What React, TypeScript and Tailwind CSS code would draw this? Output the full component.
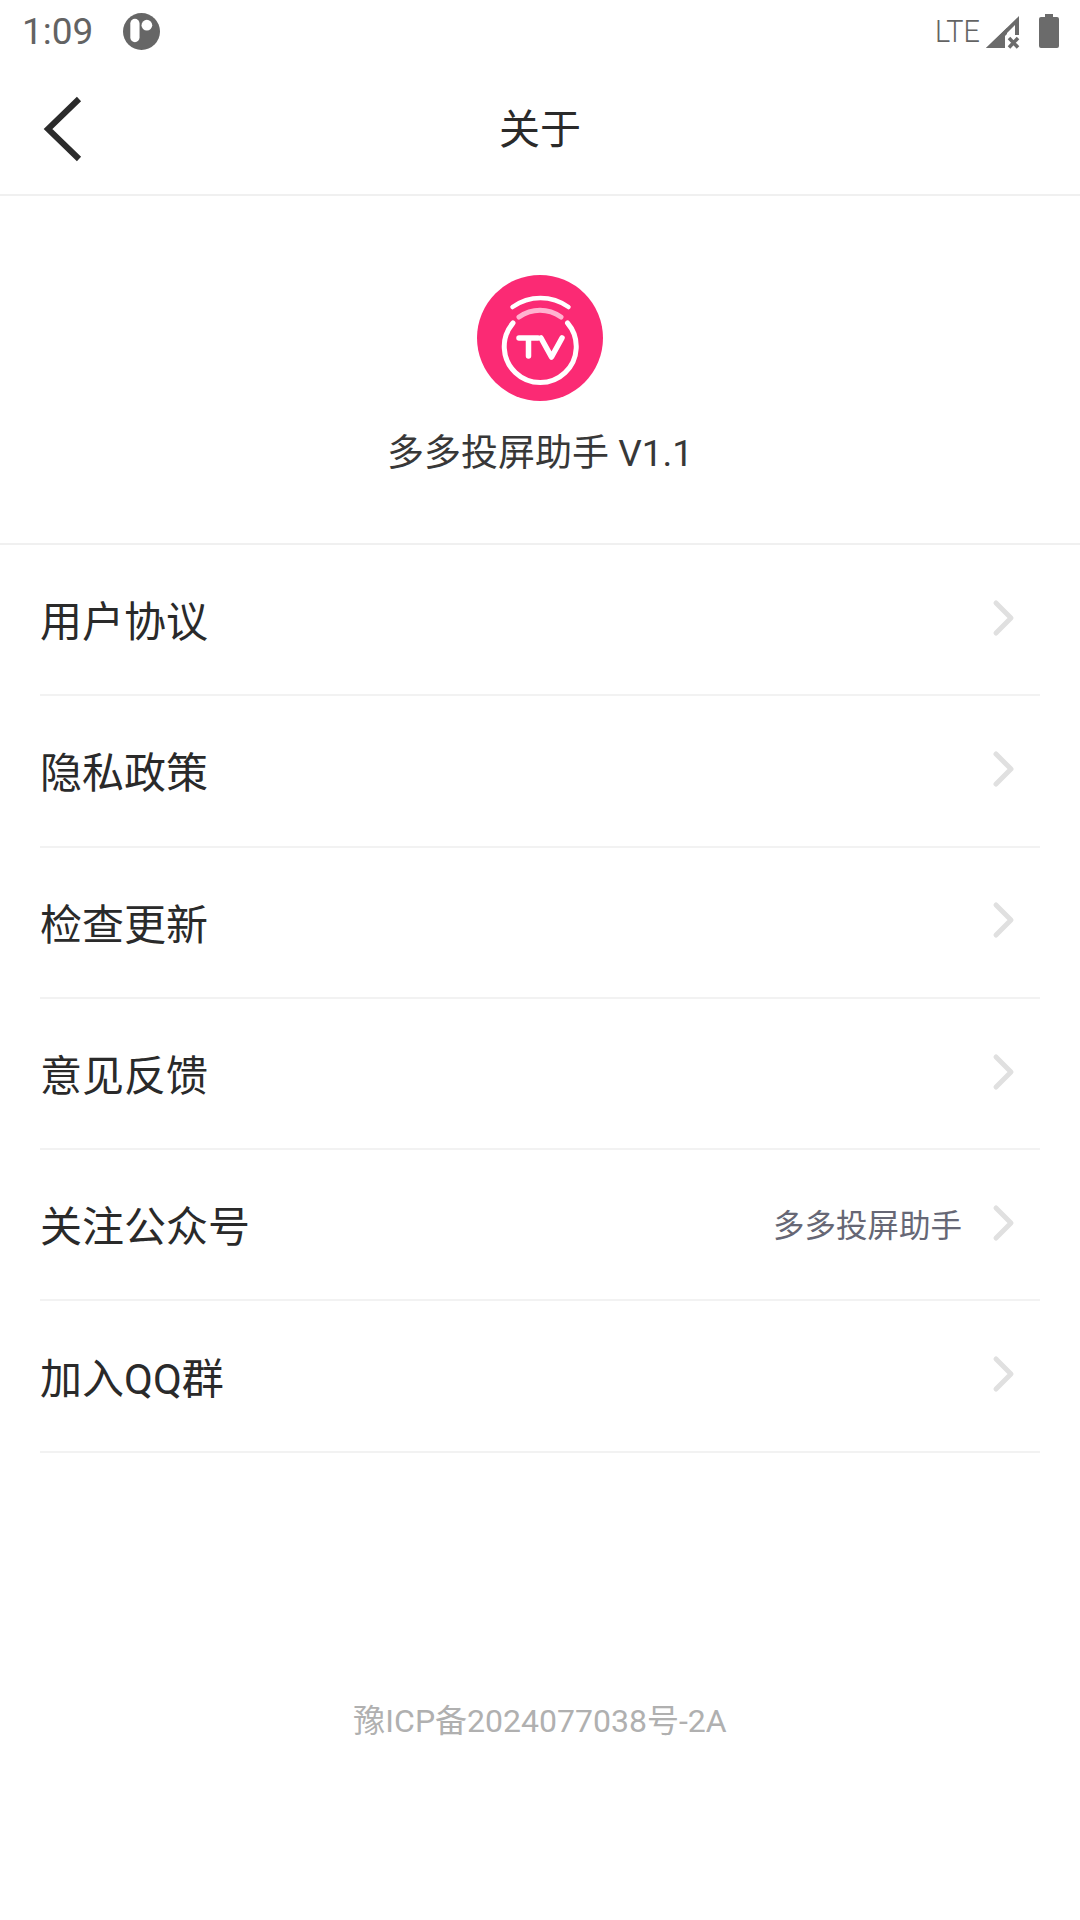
const rows = [
  { label: "用户协议" },
  { label: "隐私政策" },
  { label: "检查更新" },
  { label: "意见反馈" },
  { label: "关注公众号", extra: "多多投屏助手" },
  { label: "加入QQ群" },
];

function Chevron() {
  return (
    <svg width="24" height="40" viewBox="0 0 24 40" fill="none" className="ml-[30px] mr-[24px] -mt-[4px]">
      <path d="M4 5l15 15L4 35" stroke="#e0e0e0" strokeWidth="5" strokeLinecap="round" strokeLinejoin="round" />
    </svg>
  );
}

function StatusBar() {
  return (
    <div className="flex h-[66px] items-start justify-between pl-[22px] pr-[21px] pt-[13px] text-[#636363]">
      <div className="flex items-center">
        <span className="text-[37px] leading-[37px] font-['Roboto',sans-serif]">1:09</span>
        <svg width="37" height="37" viewBox="0 0 38 38" className="ml-[30px]">
          <circle cx="19" cy="19" r="19" fill="#666" />
          <rect x="7.5" y="6" width="9.5" height="24" rx="4.75" fill="#fff" />
          <circle cx="24.5" cy="12.5" r="5.5" fill="#fff" />
        </svg>
      </div>
      <div className="flex items-start">
        <span className="mt-[1px] origin-right scale-x-90 text-[32px] leading-[35px] font-['Roboto',sans-serif] font-light">LTE</span>
        <svg width="34" height="34" viewBox="0 0 34 34" className="ml-[6px] mt-[2px]">
          <path d="M0 33L33 1v19h-4V10L17 22v11z" fill="#6b6b6b" />
          <path d="M0 33l21-20v6l-2 2v12z" fill="#6b6b6b" />
          <path d="M23 23l9 9.5M32 23l-9 9.5" stroke="#6b6b6b" strokeWidth="3.5" />
        </svg>
        <svg width="20" height="34" viewBox="0 0 20 34" className="ml-[19px] mt-[1px]">
          <path d="M6 0h8v3h4a2 2 0 0 1 2 2v27a2 2 0 0 1-2 2H2a2 2 0 0 1-2-2V5a2 2 0 0 1 2-2h4z" fill="#6b6b6b" />
        </svg>
      </div>
    </div>
  );
}

function Logo() {
  return (
    <svg width="126" height="126" viewBox="0 0 126 126">
      <circle cx="63" cy="63" r="63" fill="#fb2a74" />
      <path d="M35.500 32c17-12 39-12 56 0" stroke="#fff" strokeWidth="4.500" strokeLinecap="round" fill="none" />
      <path d="M42 42c13-9 29-9 42 0" stroke="#ffb3d0" strokeWidth="5" strokeLinecap="round" fill="none" />
      <path d="M36 48a36 36 0 1 0 54.500 0" stroke="#fff" strokeWidth="5" strokeLinecap="round" fill="none" />
      <path d="M42 63h19M51.500 63v18M64 63l10.500 19L85 63" stroke="#fff" strokeWidth="5.500" strokeLinecap="round" strokeLinejoin="round" fill="none" />
    </svg>
  );
}

export default function App() {
  return (
    <div className="flex h-[1920px] w-[1080px] flex-col bg-white font-['Roboto','Noto_Sans_CJK_SC',sans-serif] text-[#222]">
      <StatusBar />
      <header className="relative flex h-[130px] items-center justify-center border-b-2 border-[#f0f0f0]">
        <svg width="42" height="68" viewBox="0 0 42 68" fill="none" className="absolute left-[43px] top-[29px]">
          <path d="M36 4L5 34l31 30" stroke="#2b2b2b" strokeWidth="6" />
        </svg>
        <h1 className="pt-[2px] text-[41px] font-normal text-[#2a2a2a]">关于</h1>
      </header>
      <section className="flex h-[349px] flex-col items-center border-b-2 border-[#f0f0f0] pt-[79px]">
        <Logo />
        <p className="mt-[29px] text-[37px] leading-[48px] text-[#383838]">多多投屏助手 V1.1</p>
      </section>
      <div className="px-[40px]">
        {rows.map((row) => (
          <div key={row.label} className="flex h-[151.3px] items-center justify-between border-b-2 border-[#f2f2f2]">
            <span className="pt-[6px] text-[42px] text-[#2a2a2a]">{row.label}</span>
            <div className="flex items-center">
              {row.extra && <span className="pt-[3px] text-[31.5px] text-[#666775]">{row.extra}</span>}
              <Chevron />
            </div>
          </div>
        ))}
      </div>
      <p className="mt-[248px] text-center text-[32px] leading-[40px] text-[#b0b0b0]">豫ICP备2024077038号-2A</p>
    </div>
  );
}
